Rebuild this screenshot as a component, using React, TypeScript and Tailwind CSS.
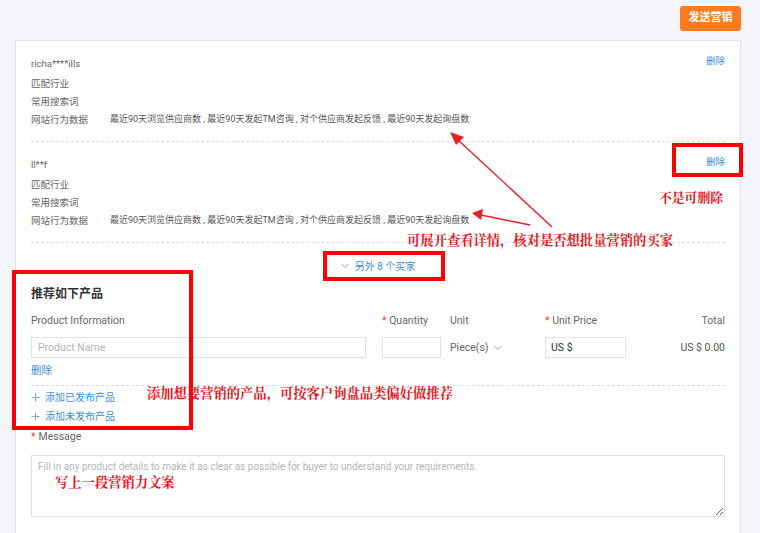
import React from "react";

const FONT = { fontFamily: 'Roboto, "Noto Sans CJK SC", "Liberation Sans", sans-serif' };
const RED_FONT = { fontFamily: '"Noto Serif CJK SC", "Noto Sans CJK SC", serif' };

function Buyer({ name }: { name: string }) {
  return (
    <div className="border-b border-dashed border-[#d9dde3] pt-[13px] pb-[12px] text-[9.5px] text-[#666]">
      <div className="flex h-[18px] items-start justify-between">
        <span className="mt-[4px] leading-[12px]">{name}</span>
        <span className="mt-[1px] leading-[12px] text-[#3b8ed8]">删除</span>
      </div>
      <div className="mt-[3px] flex h-[18px] items-center">匹配行业</div>
      <div className="flex h-[18px] items-center">常用搜索词</div>
      <div className="flex h-[18px] items-center">
        <span className="w-[79px] shrink-0">网站行为数据</span>
        <span className="text-[9px] text-[#555]">
          最近90天浏览供应商数 , 最近90天发起TM咨询 , 对个供应商发起反馈 , 最近90天发起询盘数
        </span>
      </div>
    </div>
  );
}

function Plus() {
  return (
    <svg width="9" height="9" viewBox="0 0 9 9" className="mr-[5px]">
      <path d="M4.5 0.5v8M0.5 4.5h8" stroke="#8fa6bd" strokeWidth="1" />
    </svg>
  );
}

export default function App() {
  return (
    <div
      className="relative h-[533px] w-[760px] overflow-hidden bg-[#f4f6fa] pl-[15px] pr-[19px] pt-[6px]"
      style={FONT}
    >
      <div className="flex justify-end">
        <button className="h-[25px] w-[61px] rounded-[3px] bg-[#fe7a1f] text-[11px] font-bold text-white">
          发送营销
        </button>
      </div>

      <div className="mt-[9px] h-[600px] border border-[#e2e6ec] bg-white px-[15px]">
        <Buyer name="richa****ills" />
        <Buyer name="ll**f" />

        <div className="mt-[14px] flex h-[18px] items-center justify-center text-[10px] text-[#3b8ed8]">
          <svg width="8" height="6" viewBox="0 0 8 6" className="mr-[6px]">
            <path d="M0.5 1l3.5 3.5L7.5 1" fill="none" stroke="#8aa4bf" strokeWidth="1" />
          </svg>
          另外 8 个买家
        </div>

        <div className="mt-[10px] flex h-[18px] items-center text-[12px] font-bold text-[#333]">推荐如下产品</div>

        <div className="mt-[9px] flex h-[18px] items-center text-[10.5px] text-[#666]">
          <div className="w-[335px]">Product Information</div>
          <div className="ml-[16px] w-[68px]">
            <span className="text-[#e8412c]">*</span> Quantity
          </div>
          <div className="w-[95px]">Unit</div>
          <div className="w-[81px]">
            <span className="text-[#e8412c]">*</span> Unit Price
          </div>
          <div className="flex-1 text-right">Total</div>
        </div>

        <div className="mt-[7px] flex h-[21px] items-center text-[10.5px]">
          <div className="flex h-[21px] w-[335px] items-center border border-[#dfe3e8] pl-[6px] text-[#b3b3b3]">
            Product Name
          </div>
          <div className="ml-[16px] h-[21px] w-[59px] border border-[#dfe3e8]" />
          <div className="ml-[9px] flex w-[95px] items-center text-[#666]">
            Piece(s)
            <svg width="8" height="6" viewBox="0 0 8 6" className="ml-[6px]">
              <path d="M0.5 1l3.5 3.5L7.5 1" fill="none" stroke="#999" strokeWidth="1" />
            </svg>
          </div>
          <div className="flex h-[21px] w-[81px] items-center border border-[#dfe3e8] pl-[5px] text-[#333]">US $</div>
          <div className="flex-1 text-right text-[#555]">US $ 0.00</div>
        </div>

        <div className="mt-[4px] border-b border-dashed border-[#d9dde3] pb-[5px]">
          <div className="flex h-[18px] items-center text-[10.5px] text-[#3b8ed8]">删除</div>
        </div>

        <div className="mt-[2px] flex h-[19px] items-center text-[10px] text-[#3b8ed8]">
          <Plus />
          添加已发布产品
        </div>
        <div className="flex h-[19px] items-center text-[10px] text-[#3b8ed8]">
          <Plus />
          添加未发布产品
        </div>

        <div className="mt-[2px] flex h-[18px] items-center text-[10.5px] text-[#666]">
          <span className="mr-[3px] text-[#e8412c]">*</span>Message
        </div>
        <textarea
          className="mt-[9px] block h-[62px] w-full border border-[#dfe3e8] px-[6px] py-[3px] text-[10px] text-[#333] outline-none placeholder:text-[#b5b5b5]"
          placeholder="Fill in any product details to make it as clear as possible for buyer to understand your requirements."
        />
      </div>

      {/* Annotation overlays */}
      <div className="pointer-events-none absolute left-[672px] top-[143px] h-[34px] w-[71px] border-[4px] border-[#ff0000]" />
      <div className="pointer-events-none absolute left-[323px] top-[251px] h-[30px] w-[122px] border-[4px] border-[#ff0000]" />
      <div className="pointer-events-none absolute left-[12px] top-[270px] h-[160px] w-[181px] border-[4px] border-[#ff0000]" />

      <div className="pointer-events-none absolute left-[659px] top-[189px] text-[12.8px] font-bold leading-[16px] text-[#e8141b]" style={RED_FONT}>
        不是可删除
      </div>
      <div className="pointer-events-none absolute left-[407px] top-[232px] text-[13.3px] font-bold leading-[16px] text-[#e8141b]" style={RED_FONT}>
        可展开查看详情，核对是否想批量营销的买家
      </div>
      <div className="pointer-events-none absolute left-[147px] top-[385px] text-[13.3px] font-bold leading-[16px] text-[#e8141b]" style={RED_FONT}>
        添加想要营销的产品，可按客户询盘品类偏好做推荐
      </div>
      <div className="pointer-events-none absolute left-[55px] top-[474px] text-[13.3px] font-bold leading-[16px] text-[#e8141b]" style={RED_FONT}>
        写上一段营销力文案
      </div>

      <svg className="pointer-events-none absolute left-0 top-0" width="760" height="533" viewBox="0 0 760 533">
        <line x1="552" y1="227" x2="457" y2="139" stroke="#ee1c24" strokeWidth="1.4" />
        <polygon points="450,132 464,137 456,145" fill="#ee1c24" />
        <line x1="530" y1="225" x2="481" y2="215" stroke="#ee1c24" strokeWidth="1.4" />
        <polygon points="472,213 483,209 481,220" fill="#ee1c24" />
      </svg>
    </div>
  );
}
